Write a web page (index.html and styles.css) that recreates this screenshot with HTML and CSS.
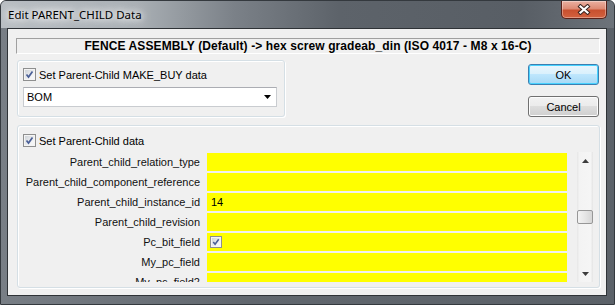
FILE: index.html
```html
<!DOCTYPE html>
<html lang="en">
  <head>
    <meta charset="UTF-8" />
    <title>Edit PARENT_CHILD Data</title>
    <link rel="stylesheet" href="styles.css">
  </head>
  <body>
    <div class="window">
      <div class="titlebar">
        <span class="title">Edit PARENT_CHILD Data</span>
        <div class="close-btn">
          <svg width="14" height="11" viewBox="0 0 14 11">
            <path d="M3.5 2.5 L10.5 8.5 M10.5 2.5 L3.5 8.5" stroke="#3b2520" stroke-width="4.2" stroke-linecap="square" />
            <path d="M3.5 2.5 L10.5 8.5 M10.5 2.5 L3.5 8.5" stroke="#ffffff" stroke-width="2.2" stroke-linecap="square" />
          </svg>
        </div>
      </div>
      <div class="client">
        <div class="header-box">FENCE ASSEMBLY (Default) -&gt; hex screw gradeab_din (ISO 4017 - M8 x 16-C)</div>
        <div class="top-row">
          <div class="group make-buy">
            <div class="check-line">
              <span class="check">
                <svg width="11" height="11" viewBox="0 0 11 11"><path d="M2.5 5.5 L4.5 8 L8.5 2.5" fill="none" stroke="#4a5f97" stroke-width="1.7" /></svg>
              </span>
              <span>Set Parent-Child MAKE_BUY data</span>
            </div>
            <div class="combo">
              <span>BOM</span>
              <svg class="combo-arrow" width="7" height="4" viewBox="0 0 7 4"><path d="M0 0h7L3.5 4z" fill="#000" /></svg>
            </div>
          </div>
          <div class="buttons">
            <div class="btn btn-default">OK</div>
            <div class="btn">Cancel</div>
          </div>
        </div>
        <div class="group pc-data">
          <div class="check-line">
            <span class="check">
              <svg width="11" height="11" viewBox="0 0 11 11"><path d="M2.5 5.5 L4.5 8 L8.5 2.5" fill="none" stroke="#4a5f97" stroke-width="1.7" /></svg>
            </span>
            <span>Set Parent-Child data</span>
          </div>
          <div class="list-area">
            <div class="rows">
              <div class="row">
                <div class="row-label">Parent_child_relation_type</div>
                <div class="field"></div>
              </div>
              <div class="row">
                <div class="row-label">Parent_child_component_reference</div>
                <div class="field"></div>
              </div>
              <div class="row">
                <div class="row-label">Parent_child_instance_id</div>
                <div class="field">14</div>
              </div>
              <div class="row">
                <div class="row-label">Parent_child_revision</div>
                <div class="field"></div>
              </div>
              <div class="row">
                <div class="row-label">Pc_bit_field</div>
                <div class="field">
                  <span class="check check-small">
                    <svg width="10" height="10" viewBox="0 0 11 11"><path d="M2.5 5.5 L4.5 8 L8.5 2.5" fill="none" stroke="#4a5f97" stroke-width="1.7" /></svg>
                  </span>
                </div>
              </div>
              <div class="row">
                <div class="row-label">My_pc_field</div>
                <div class="field"></div>
              </div>
              <div class="row">
                <div class="row-label">My_pc_field2</div>
                <div class="field"></div>
              </div>
            </div>
            <div class="scrollbar">
              <div class="sb-btn">
                <svg width="7" height="4" viewBox="0 0 7 4"><path d="M0 4h7L3.5 0z" fill="#3c3c3c" /></svg>
              </div>
              <div class="sb-track">
                <div class="sb-thumb"></div>
              </div>
              <div class="sb-btn">
                <svg width="7" height="4" viewBox="0 0 7 4"><path d="M0 0h7L3.5 4z" fill="#3c3c3c" /></svg>
              </div>
            </div>
          </div>
        </div>
      </div>
    </div>
  </body>
</html>
```

FILE: styles.css
```css
* {
  box-sizing: border-box;
}
body {
  margin: 0;
  font-family: "Liberation Sans", Arial, sans-serif;
  font-size: 11px;
  color: #000;
  background: #fff;
}
.window {
  width: 615px;
  height: 305px;
  display: flex;
  flex-direction: column;
  background: linear-gradient(to right, #787e85, #61676e 40%, #5b6168);
  border: 1px solid #34393e;
  border-radius: 6px 6px 0 0;
  overflow: hidden;
}
.titlebar {
  height: 27px;
  display: flex;
  align-items: flex-start;
  padding: 0 7px 0 7px;
  background: linear-gradient(to right, #b9bec3 0%, #aab0b5 22%, #7b8188 38%, #5d636a 55%, #585e65 85%, #6d737a 100%);
}
.title {
  font-family: "Noto Sans", "Open Sans", sans-serif;
  font-size: 11.5px;
  line-height: 27px;
  color: #000;
  text-shadow: 0 0 6px #fff, 0 0 10px #fff, 0 0 14px #fff;
}
.close-btn {
  margin-left: auto;
  width: 46px;
  height: 18px;
  display: flex;
  align-items: center;
  justify-content: center;
  border: 1px solid #5b2119;
  border-top: none;
  border-radius: 0 0 5px 5px;
  background: linear-gradient(#eab0a1 0%, #dd8a74 45%, #c8502f 55%, #d3623f 100%);
  box-shadow: inset 0 0 0 1px rgba(255, 255, 255, 0.35);
}
.client {
  flex: 1;
  margin: 0 7px 8px 6px;
  border: 1px solid #2e3236;
  background: #f0f0f0;
  display: flex;
  flex-direction: column;
}
.header-box {
  margin: 9px 6px 0 8px;
  height: 16px;
  border: 1px solid;
  border-color: #a0a0a0 #ffffff #ffffff #a0a0a0;
  font-size: 12px;
  font-weight: bold;
  letter-spacing: 0.1px;
  text-align: center;
  line-height: 14px;
}
.top-row {
  display: flex;
  margin-top: 6px;
}
.group {
  border: 1px solid #d5dfe5;
  border-radius: 3px;
  box-shadow: inset 1px 1px 0 #fff, 1px 1px 0 #fff;
}
.make-buy {
  margin-left: 9px;
  width: 268px;
  height: 57px;
  padding: 7px 0 0 5px;
}
.check-line {
  display: flex;
  align-items: center;
  gap: 3px;
  height: 13px;
}
.check {
  width: 13px;
  height: 13px;
  display: inline-flex;
  align-items: center;
  justify-content: center;
  border: 1px solid #8e8f8f;
  background: linear-gradient(135deg, #c9ced4, #f4f5f6 70%);
  box-shadow: inset 0 0 0 1px #f4f4f4;
}
.check-small {
  width: 12px;
  height: 12px;
}
.combo {
  margin-top: 6px;
  width: 254px;
  height: 20px;
  display: flex;
  align-items: center;
  padding: 0 4px 0 3px;
  background: #fff;
  border: 1px solid #c9ccd0;
  border-top-color: #abadb3;
}
.combo-arrow {
  margin-left: auto;
  margin-right: 1px;
}
.buttons {
  margin-left: auto;
  margin-right: 7px;
  padding-top: 4px;
  display: flex;
  flex-direction: column;
  gap: 11px;
}
.btn {
  width: 71px;
  height: 21px;
  display: flex;
  align-items: center;
  justify-content: center;
  border: 1px solid #707070;
  border-radius: 3px;
  background: linear-gradient(#f2f2f2 0%, #ebebeb 49%, #dddddd 50%, #cfcfcf 100%);
  box-shadow: inset 0 0 0 1px #fcfcfc;
}
.btn-default {
  border-color: #3c7fb1;
  background: linear-gradient(#eaf6fd 0%, #d9f0fc 49%, #bee6fd 50%, #a7d9f5 100%);
  box-shadow: inset 0 0 0 1px #48d2ff;
}
.pc-data {
  margin: 8px 6px 0 9px;
  height: 163px;
  padding: 8px 6px 0 5px;
}
.list-area {
  display: flex;
  margin-top: 5px;
  height: 130px;
}
.rows {
  width: 544px;
  padding-top: 1px;
  overflow: hidden;
}
.row {
  display: flex;
  gap: 7px;
  height: 18px;
  margin-bottom: 2px;
}
.row-label {
  width: 177px;
  text-align: right;
  line-height: 18px;
  color: #111;
}
.field {
  width: 360px;
  background: #ffff00;
  line-height: 18px;
  padding-left: 4px;
  display: flex;
  align-items: center;
}
.field .check {
  margin-left: -1px;
}
.scrollbar {
  margin-left: 10px;
  width: 16px;
  display: flex;
  flex-direction: column;
  background: linear-gradient(to right, #e6e6e6, #f3f3f3 15%, #f5f5f5 85%, #e4e4e4);
}
.sb-btn {
  height: 17px;
  display: flex;
  align-items: center;
  justify-content: center;
}
.sb-track {
  flex: 1;
}
.sb-thumb {
  margin-top: 41px;
  height: 14px;
  border: 1px solid #979797;
  border-radius: 2px;
  background: linear-gradient(to right, #f3f3f3, #e6e6e6 50%, #d6d6d6);
}
```
